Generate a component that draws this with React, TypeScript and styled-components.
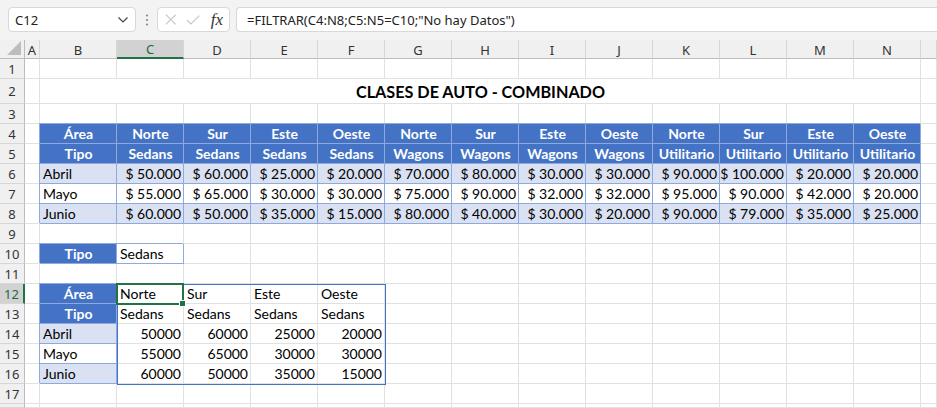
import React from "react";
import styled, { createGlobalStyle } from "styled-components";

const GlobalStyle = createGlobalStyle`
  html, body {
    margin: 0;
    padding: 0;
    background: #ffffff;
    overflow: hidden;
  }
  body {
    width: 937px;
    height: 408px;
    font-family: "Noto Sans", "Open Sans", sans-serif;
  }
`;

const TopBar = styled.div`
  height: 40px;
  box-sizing: border-box;
  background: #f3f3f3;
  display: flex;
  align-items: flex-start;
  padding: 7px 0 0 8px;
`;

const NameBox = styled.div`
  width: 128px;
  height: 25px;
  box-sizing: border-box;
  background: #ffffff;
  border: 1px solid #d8d8d8;
  border-radius: 4px;
  display: flex;
  align-items: center;
  justify-content: space-between;
  padding: 0 6px 0 6px;
  font-size: 13px;
  color: #222;
`;

const Dots = styled.div`
  width: 21px;
  height: 25px;
  display: flex;
  align-items: center;
  justify-content: center;
`;

const FxBox = styled.div`
  width: 73px;
  height: 25px;
  box-sizing: border-box;
  background: #ffffff;
  border: 1px solid #d8d8d8;
  border-radius: 4px;
  display: flex;
  align-items: center;
  gap: 9px;
  padding: 0 6px 0 7px;
`;

const Fx = styled.span`
  font-family: "Liberation Serif", serif;
  font-style: italic;
  font-size: 17px;
  color: #333;
  margin-left: 2px;
`;

const FormulaBox = styled.div`
  flex: 1;
  height: 25px;
  margin-left: 6px;
  box-sizing: border-box;
  background: #ffffff;
  border: 1px solid #d8d8d8;
  border-right: none;
  border-radius: 4px 0 0 4px;
  display: flex;
  align-items: center;
  padding-left: 10px;
  font-size: 13px;
  color: #222;
`;

const Grid = styled.div`
  display: grid;
  grid-template-columns: 25px 15px 77px repeat(12, 67px) 16px;
  grid-template-rows: 19px 20px 25px repeat(15, 20px) 4px;
`;

const Corner = styled.div`
  grid-row: 1;
  grid-column: 1;
  background: #f0f0f0;
  box-sizing: border-box;
  border-right: 1px solid #bcbcbc;
  border-bottom: 1px solid #bcbcbc;
  display: flex;
  align-items: flex-end;
  justify-content: flex-end;
  padding: 0 3px 3px 0;
`;

const ColHead = styled.div<{ $c: number; $sel?: boolean }>`
  grid-row: 1;
  grid-column: ${(p) => p.$c};
  box-sizing: border-box;
  background: ${(p) => (p.$sel ? "#d2d2d2" : "#f0f0f0")};
  border-right: 1px solid #d6d6d6;
  border-bottom: ${(p) => (p.$sel ? "2px solid #217346" : "1px solid #bcbcbc")};
  display: flex;
  align-items: center;
  justify-content: center;
  font-size: 13px;
  color: ${(p) => (p.$sel ? "#1d6a3f" : "#333")};
  padding-top: 1px;
`;

const RowHead = styled.div<{ $r: number; $sel?: boolean }>`
  grid-row: ${(p) => p.$r};
  grid-column: 1;
  box-sizing: border-box;
  background: ${(p) => (p.$sel ? "#d2d2d2" : "#f0f0f0")};
  border-right: ${(p) => (p.$sel ? "2px solid #217346" : "1px solid #bcbcbc")};
  border-bottom: 1px solid #d6d6d6;
  display: flex;
  align-items: center;
  justify-content: center;
  overflow: hidden;
  font-size: 13px;
  color: ${(p) => (p.$sel ? "#1d6a3f" : "#333")};
`;

type Kind = "plain" | "head" | "band" | "box" | "title";

const isBoxed = (k: Kind) => k === "head" || k === "band" || k === "box";

const Cell = styled.div<{
  $r: number;
  $c: number;
  $span: number;
  $kind: Kind;
  $align: string;
}>`
  grid-row: ${(p) => p.$r};
  grid-column: ${(p) => p.$c} / span ${(p) => p.$span};
  box-sizing: border-box;
  min-width: 0;
  overflow: hidden;
  white-space: nowrap;
  display: flex;
  align-items: flex-end;
  justify-content: ${(p) => p.$align};
  padding: 0 2px 1px 3px;
  font-family: "Lato", "Liberation Sans", sans-serif;
  font-size: ${(p) => (p.$kind === "title" ? "16.2px" : "14px")};
  font-weight: ${(p) => (p.$kind === "head" || p.$kind === "title" ? 700 : 400)};
  color: ${(p) => (p.$kind === "head" ? "#ffffff" : "#000000")};
  background: ${(p) =>
    p.$kind === "head" ? "#4472c4" : p.$kind === "band" ? "#d9e1f2" : "#ffffff"};
  border-right: 1px solid ${(p) => (isBoxed(p.$kind) ? "#8ea9db" : "#e1e1e1")};
  border-bottom: 1px solid ${(p) => (isBoxed(p.$kind) ? "#8ea9db" : "#e1e1e1")};
  ${(p) => (isBoxed(p.$kind) ? "box-shadow: -1px -1px 0 #8ea9db;" : "")}
  ${(p) => (p.$kind === "title" ? "align-items: center; padding-top: 2px;" : "")}
`;

const SpillFrame = styled.div`
  grid-row: 13 / span 5;
  grid-column: 4 / span 4;
  margin: 0 -1px -1px 0;
  border: 1px solid #4472c4;
  pointer-events: none;
  position: relative;
  z-index: 2;
`;

const Selection = styled.div`
  grid-row: 13;
  grid-column: 4;
  margin: -1px 0 -1px -1px;
  border: 2px solid #217346;
  position: relative;
  z-index: 3;
`;

const Handle = styled.div`
  position: absolute;
  right: -4px;
  bottom: -4px;
  width: 5px;
  height: 5px;
  background: #217346;
  border: 1px solid #ffffff;
`;

type Spec = { v: string; kind: Kind; align?: string };

const LETTERS = ["A", "B", "C", "D", "E", "F", "G", "H", "I", "J", "K", "L", "M", "N", "O"];
const REGIONS = ["Norte", "Sur", "Este", "Oeste"];
const TYPES = ["Sedans", "Wagons", "Utilitario"];

const months: [string, number[]][] = [
  ["Abril", [50000, 60000, 25000, 20000, 70000, 80000, 30000, 30000, 90000, 100000, 20000, 20000]],
  ["Mayo", [55000, 65000, 30000, 30000, 75000, 90000, 32000, 32000, 95000, 90000, 42000, 20000]],
  ["Junio", [60000, 50000, 35000, 15000, 80000, 40000, 30000, 20000, 90000, 79000, 35000, 25000]],
];

const money = (n: number) => "$ " + String(n).replace(/\B(?=(\d{3})+(?!\d))/g, ".");

const sheet: Record<string, Spec> = {};
const put = (col: string, row: number, s: Spec) => {
  sheet[col + row] = s;
};

put("B", 2, { v: "CLASES DE AUTO - COMBINADO", kind: "title", align: "center" });
put("B", 4, { v: "Área", kind: "head", align: "center" });
put("B", 5, { v: "Tipo", kind: "head", align: "center" });
for (let i = 0; i < 12; i++) {
  const col = LETTERS[i + 2];
  put(col, 4, { v: REGIONS[i % 4], kind: "head", align: "center" });
  put(col, 5, { v: TYPES[Math.floor(i / 4)], kind: "head", align: "center" });
}
months.forEach(([name, vals], m) => {
  const row = 6 + m;
  const kind: Kind = m === 1 ? "box" : "band";
  put("B", row, { v: name, kind });
  vals.forEach((n, i) => put(LETTERS[i + 2], row, { v: money(n), kind, align: "flex-end" }));
});

put("B", 10, { v: "Tipo", kind: "head", align: "center" });
put("C", 10, { v: "Sedans", kind: "box" });

put("B", 12, { v: "Área", kind: "head", align: "center" });
put("B", 13, { v: "Tipo", kind: "head", align: "center" });
months.forEach(([name, vals], m) => {
  const row = 14 + m;
  put("B", row, { v: name, kind: m === 1 ? "box" : "band" });
  vals.slice(0, 4).forEach((n, i) => put(LETTERS[i + 2], row, { v: String(n), kind: "plain", align: "flex-end" }));
});
REGIONS.forEach((reg, i) => {
  put(LETTERS[i + 2], 12, { v: reg, kind: "plain" });
  put(LETTERS[i + 2], 13, { v: "Sedans", kind: "plain" });
});

// row 18 is only a sliver at the bottom edge, so its number is not shown
const ROWS = Array.from({ length: 18 }, (_, i) => i + 1);

const App = () => {
  const cells: React.ReactNode[] = [];
  ROWS.forEach((row) => {
    cells.push(
      <RowHead key={"h" + row} $r={row + 1} $sel={row === 12}>
        {row < 18 ? row : null}
      </RowHead>
    );
    LETTERS.forEach((col, ci) => {
      if (row === 2 && ci >= 2 && ci <= 13) return;
      const spec = sheet[col + row];
      const span = row === 2 && col === "B" ? 13 : 1;
      cells.push(
        <Cell
          key={col + row}
          $r={row + 1}
          $c={ci + 2}
          $span={span}
          $kind={spec ? spec.kind : "plain"}
          $align={spec?.align ?? "flex-start"}
        >
          {spec?.v}
        </Cell>
      );
    });
  });

  return (
    <>
      <GlobalStyle />
      <TopBar>
        <NameBox>
          <span>C12</span>
          <svg width="12" height="8" viewBox="0 0 12 8">
            <polyline points="1.5,1.5 6,6 10.5,1.5" fill="none" stroke="#444" strokeWidth="1.2" />
          </svg>
        </NameBox>
        <Dots>
          <svg width="4" height="12" viewBox="0 0 4 12">
            <circle cx="2" cy="1.5" r="1.1" fill="#888" />
            <circle cx="2" cy="6" r="1.1" fill="#888" />
            <circle cx="2" cy="10.5" r="1.1" fill="#888" />
          </svg>
        </Dots>
        <FxBox>
          <svg width="13" height="13" viewBox="0 0 13 13">
            <path d="M1 1 L12 12 M12 1 L1 12" stroke="#c4c4c4" strokeWidth="1.2" fill="none" />
          </svg>
          <svg width="16" height="12" viewBox="0 0 16 12">
            <polyline points="1,6 5.5,10.5 15,1" stroke="#c4c4c4" strokeWidth="1.2" fill="none" />
          </svg>
          <Fx>fx</Fx>
        </FxBox>
        <FormulaBox>=FILTRAR(C4:N8;C5:N5=C10;"No hay Datos")</FormulaBox>
      </TopBar>
      <Grid>
        <Corner>
          <svg width="14" height="14" viewBox="0 0 14 14">
            <polygon points="14,0 14,14 0,14" fill="#bdbdbd" />
          </svg>
        </Corner>
        {LETTERS.map((l, i) => (
          <ColHead key={l} $c={i + 2} $sel={l === "C"}>
            {l === "O" ? null : l}
          </ColHead>
        ))}
        {cells}
        <SpillFrame />
        <Selection>
          <Handle />
        </Selection>
      </Grid>
    </>
  );
};

export default App;
